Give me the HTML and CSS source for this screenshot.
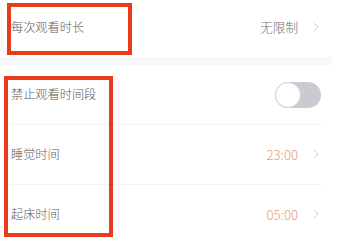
FILE: index.html
```html
<!DOCTYPE html>
<html lang="zh">
<head>
<meta charset="utf-8">
<link rel="stylesheet" href="styles.css">
</head>
<body>
<div class="page">
  <div class="row row-first">
    <span class="label">每次观看时长</span>
    <span class="right">
      <span class="value">无限制</span>
      <svg class="chev" width="6" height="10" viewBox="0 0 6 10"><polyline points="1,1 5,5 1,9" fill="none" stroke="#cfcfcf" stroke-width="1"/></svg>
    </span>
  </div>
  <div class="band"></div>
  <div class="row">
    <span class="label">禁止观看时间段</span>
    <span class="toggle"><span class="knob"></span></span>
  </div>
  <div class="sep"></div>
  <div class="row">
    <span class="label">睡觉时间</span>
    <span class="right">
      <span class="value orange">23:00</span>
      <svg class="chev" width="6" height="10" viewBox="0 0 6 10"><polyline points="1,1 5,5 1,9" fill="none" stroke="#cfcfcf" stroke-width="1"/></svg>
    </span>
  </div>
  <div class="sep"></div>
  <div class="row">
    <span class="label">起床时间</span>
    <span class="right">
      <span class="value orange">05:00</span>
      <svg class="chev" width="6" height="10" viewBox="0 0 6 10"><polyline points="1,1 5,5 1,9" fill="none" stroke="#cfcfcf" stroke-width="1"/></svg>
    </span>
  </div>
  <div class="mark mark-1"></div>
  <div class="mark mark-2"></div>
</div>
</body>
</html>
```
FILE: styles.css
```css
html, body {
  margin: 0;
  padding: 0;
  background: #ffffff;
}
body {
  font-family: "Noto Sans CJK SC", "Noto Sans", sans-serif;
  overflow: hidden;
}
.page {
  position: relative;
  width: 338px;
  height: 239px;
  overflow: hidden;
}
.row {
  display: flex;
  align-items: center;
  justify-content: space-between;
  height: 59px;
  padding: 0 17px 0 11px;
}
.row-first {
  height: 54px;
  padding-bottom: 3px;
}
.label {
  font-size: 12.2px;
  font-weight: 300;
  color: #5a5a5a;
  line-height: 1;
}
.right {
  display: flex;
  align-items: center;
  gap: 15px;
  padding-right: 2px;
}
.value {
  font-size: 12.6px;
  font-weight: 300;
  color: #707070;
  line-height: 1;
}
.orange {
  color: #e39e6f;
  font-size: 13.2px;
}
.chev {
  display: block;
}
.band {
  height: 8px;
  margin-right: 6px;
  background: #f7f8fa;
}
.sep {
  height: 1px;
  margin: 0 15px 0 11px;
  background: #f4f4f4;
}
.toggle {
  position: relative;
  width: 46px;
  height: 26px;
  border-radius: 13px;
  background: #c9cad2;
}
.knob {
  position: absolute;
  left: 0;
  top: 0;
  width: 24px;
  height: 24px;
  border-radius: 50%;
  background: #ffffff;
  border: 1px solid #d6d6da;
}
.mark {
  position: absolute;
  border: 4px solid #ea3a1c;
  box-sizing: border-box;
}
.mark-1 {
  left: 7px;
  top: 3px;
  width: 125px;
  height: 52px;
}
.mark-2 {
  left: 4px;
  top: 76px;
  width: 109px;
  height: 161px;
}
```
